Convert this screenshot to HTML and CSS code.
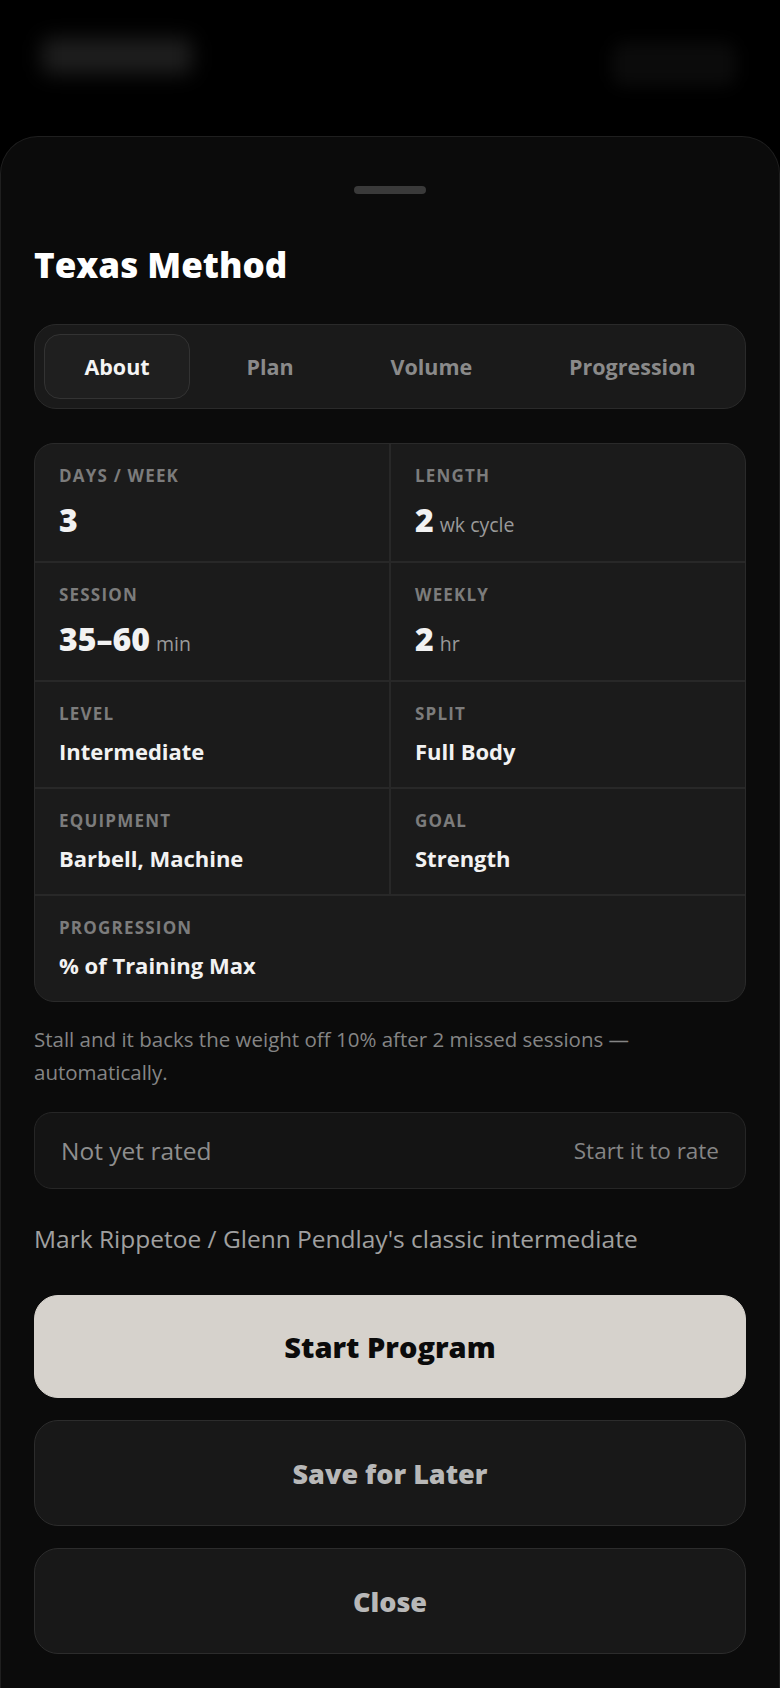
FILE: index.html
```html
<!DOCTYPE html>
<html lang="en">
<head>
    <meta charset="UTF-8">
    <meta name="viewport" content="width=device-width, initial-scale=1.0">
    <title>Texas Method</title>
    <link rel="stylesheet" href="styles.css">
</head>
<body>
    <!-- page behind the sheet, dimmed and blurred -->
    <header class="backdrop">
        <div class="backdrop-title"></div>
        <div class="backdrop-action"></div>
    </header>

    <section class="sheet">
        <div class="handle"></div>
        <h1>Texas Method</h1>

        <nav class="tabs">
            <button class="tab active">About</button>
            <button class="tab">Plan</button>
            <button class="tab">Volume</button>
            <button class="tab">Progression</button>
        </nav>

        <div class="stats">
            <div class="stat">
                <span class="label">Days / Week</span>
                <span class="value big">3</span>
            </div>
            <div class="stat">
                <span class="label">Length</span>
                <span class="value big">2<span class="unit">wk cycle</span></span>
            </div>
            <div class="stat">
                <span class="label">Session</span>
                <span class="value big">35–60<span class="unit">min</span></span>
            </div>
            <div class="stat">
                <span class="label">Weekly</span>
                <span class="value big">2<span class="unit">hr</span></span>
            </div>
            <div class="stat">
                <span class="label">Level</span>
                <span class="value">Intermediate</span>
            </div>
            <div class="stat">
                <span class="label">Split</span>
                <span class="value">Full Body</span>
            </div>
            <div class="stat">
                <span class="label">Equipment</span>
                <span class="value">Barbell, Machine</span>
            </div>
            <div class="stat">
                <span class="label">Goal</span>
                <span class="value">Strength</span>
            </div>
            <div class="stat wide">
                <span class="label">Progression</span>
                <span class="value">% of Training Max</span>
            </div>
        </div>

        <p class="note">Stall and it backs the weight off 10% after 2 missed sessions — automatically.</p>

        <div class="rating">
            <span>Not yet rated</span>
            <span class="hint">Start it to rate</span>
        </div>

        <p class="credit">Mark Rippetoe / Glenn Pendlay's classic intermediate</p>

        <div class="actions">
            <button class="btn primary">Start Program</button>
            <button class="btn">Save for Later</button>
            <button class="btn">Close</button>
        </div>
    </section>
</body>
</html>
```

FILE: styles.css
```css
body {
    margin: 0;
    min-height: 100vh;
    display: flex;
    flex-direction: column;
    background: #000;
    font-family: "Open Sans", "Noto Sans", sans-serif;
    color: #f2f2f2;
}

/* blurred header behind the sheet */
.backdrop {
    height: 136px;
    display: flex;
    justify-content: space-between;
    align-items: flex-start;
    padding: 38px 44px 0 42px;
    box-sizing: border-box;
}
.backdrop-title {
    width: 150px;
    height: 36px;
    border-radius: 8px;
    background: #1e1e1e;
    filter: blur(10px);
}
.backdrop-action {
    width: 124px;
    height: 44px;
    margin-top: 4px;
    border-radius: 12px;
    background: #0b0b0b;
    filter: blur(8px);
}

.sheet {
    flex: 1;
    background: #0b0b0b;
    border: 1px solid #1f1f1f;
    border-bottom: none;
    border-radius: 38px 38px 0 0;
    padding: 0 33px 34px;
}
.handle {
    width: 72px;
    height: 8px;
    margin: 49px auto 0;
    border-radius: 4px;
    background: #3a3a3a;
}
h1 {
    margin: 50px 0 0;
    font-size: 35px;
    font-weight: 800;
    line-height: 42px;
    color: #fff;
}

.tabs {
    margin-top: 38px;
    display: flex;
    gap: 16px;
    padding: 9px;
    background: #1a1a1a;
    border: 1px solid #2a2a2a;
    border-radius: 22px;
}
.tab {
    flex: 1 1 auto;
    height: 65px;
    padding: 0 18px;
    background: none;
    border: 1px solid transparent;
    border-radius: 16px;
    font-family: inherit;
    font-size: 21.5px;
    font-weight: 700;
    color: #8a8a8a;
}
.tab.active {
    background: #1f1f1f;
    border-color: #333;
    color: #f4f4f4;
}

.stats {
    margin-top: 34px;
    display: grid;
    grid-template-columns: 1fr 1fr;
    gap: 2px;
    background: #282828;
    border: 1px solid #2a2a2a;
    border-radius: 20px;
    overflow: hidden;
}
.stat {
    display: flex;
    flex-direction: column;
    gap: 14px;
    padding: 21px 24px 23px;
    background: #1b1b1b;
}
.stat.wide {
    grid-column: span 2;
}
.label {
    font-size: 17px;
    font-weight: 700;
    line-height: 22px;
    letter-spacing: 1.2px;
    text-transform: uppercase;
    color: #7c7c7c;
}
.value {
    font-size: 22px;
    font-weight: 700;
    line-height: 25px;
    color: #f2f2f2;
}
.value.big {
    font-size: 32px;
    font-weight: 800;
    line-height: 37px;
}
.unit {
    margin-left: 6px;
    font-size: 19.5px;
    font-weight: 500;
    line-height: 1;
    color: #9a9a9a;
}

.note {
    margin: 21px 0 0;
    font-size: 20.5px;
    line-height: 33px;
    color: #858585;
}

.rating {
    margin-top: 23px;
    height: 77px;
    box-sizing: border-box;
    display: flex;
    justify-content: space-between;
    align-items: center;
    padding: 0 26px;
    background: #141414;
    border: 1px solid #262626;
    border-radius: 18px;
    font-size: 24.5px;
    color: #8e8e8e;
}
.rating .hint {
    font-size: 22.5px;
    color: #858585;
}

.credit {
    margin: 33px 0 0;
    font-size: 24.5px;
    line-height: 34px;
    color: #a0a0a0;
}

.actions {
    margin-top: 39px;
    display: flex;
    flex-direction: column;
    gap: 22px;
}
.btn {
    height: 106px;
    background: #181818;
    border: 1px solid #2c2c2c;
    border-radius: 24px;
    font-family: inherit;
    font-size: 27px;
    font-weight: 800;
    color: #b8b8b8;
}
.btn.primary {
    height: 103px;
    background: #d6d2cc;
    border-color: #d6d2cc;
    font-size: 29px;
    color: #0b0b0b;
}
```
